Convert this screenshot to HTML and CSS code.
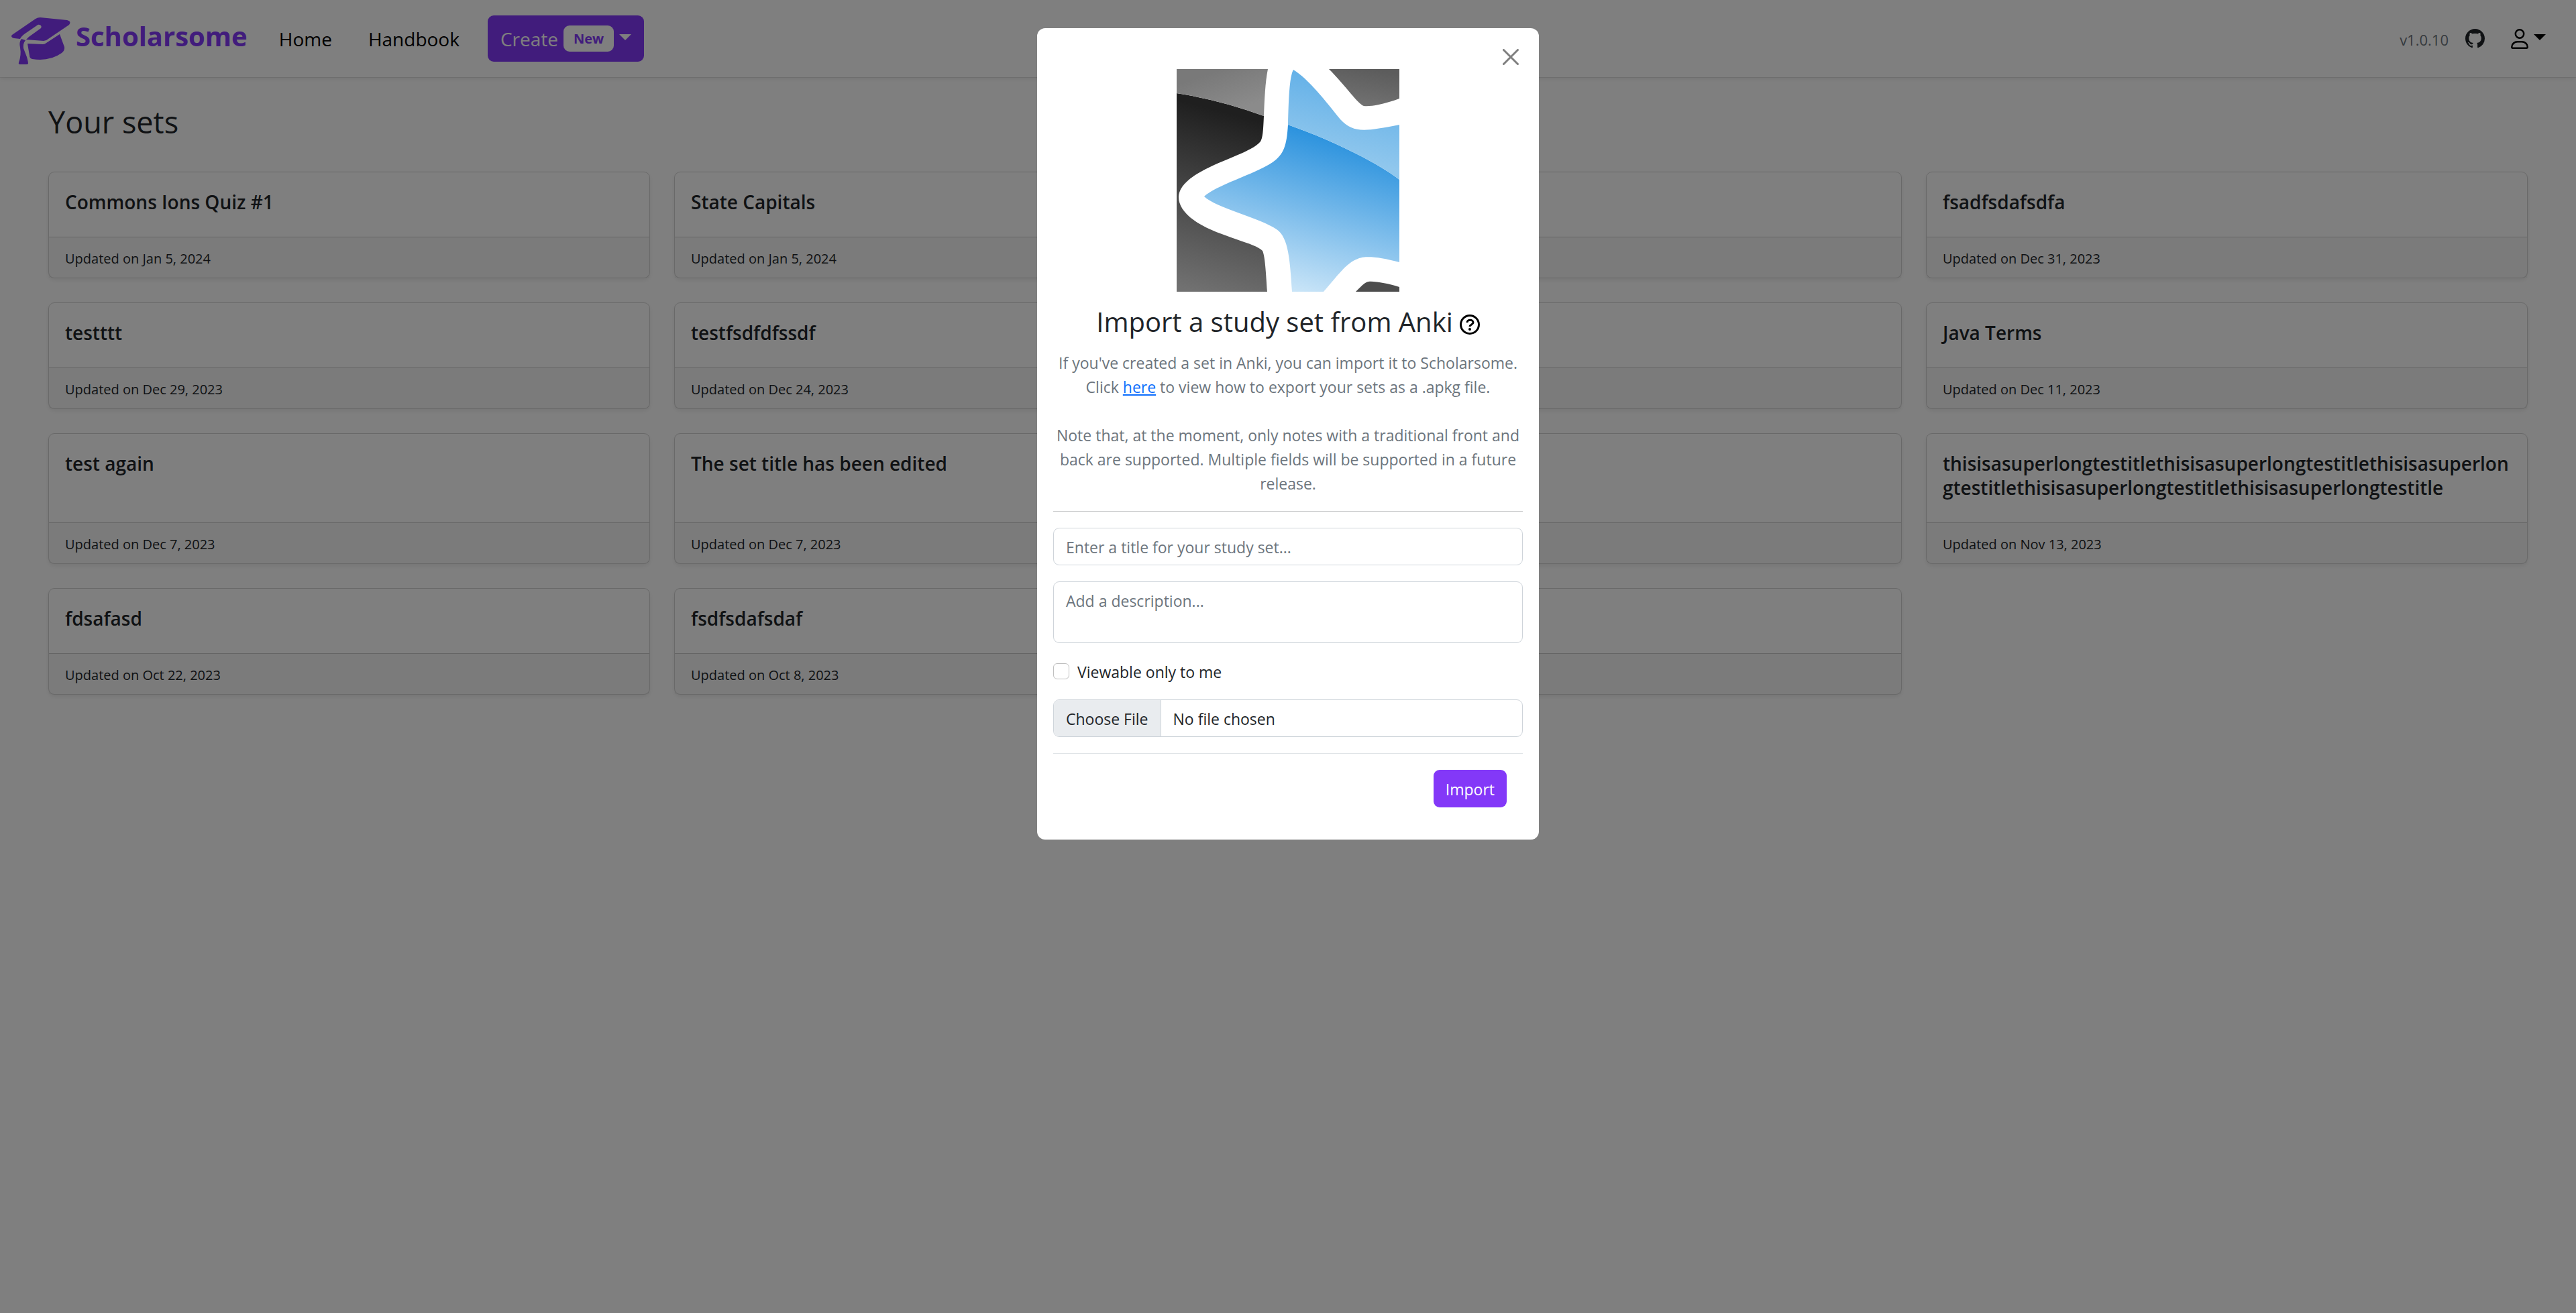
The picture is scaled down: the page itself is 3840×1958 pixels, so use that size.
FILE: index.html
```html
<!DOCTYPE html>
<html lang="en">
<head>
<meta charset="utf-8">
<title>Scholarsome</title>
<link rel="stylesheet" href="styles.css">
</head>
<body>
<header class="navbar">
  <a class="brand" href="#">
    <svg class="brand-icon" viewBox="0 0 88 70" aria-hidden="true">
      <path d="M1 26 36 2Q39 0 43 0L83 4Q90 6 86 11L52 34 48 35 22 33Q24 31 26 29L44 16Q46 12 42 11 40 10 38 12L19 25Q14 29 13 32L4 31Q-2 29 1 26Z"/>
      <path d="M15 32 21 34Q17 39 18 46L23 59Q25 66 25 69 24 70 22 70H12Q10 69 11 67 15 56 13 45 11 37 15 32Z"/>
      <path d="M24 39 47 40Q50 40 52 38L72 25 79 44Q80 49 75 53 57 66 31 62 27 61 27 57Z"/>
    </svg>
    <span>Scholarsome</span>
  </a>
  <nav class="nav">
    <a href="#">Home</a>
    <a href="#">Handbook</a>
    <button class="create" type="button"><span>Create</span><span class="badge">New</span><span class="caret"></span></button>
  </nav>
  <div class="nav-end">
    <span class="version">v1.0.10</span>
    <a class="github" href="#" aria-label="GitHub">
      <svg viewBox="0 0 16 16" aria-hidden="true"><path d="M8 0C3.58 0 0 3.58 0 8c0 3.54 2.29 6.53 5.47 7.59.4.07.55-.17.55-.38 0-.19-.01-.82-.01-1.49-2.01.37-2.53-.49-2.69-.94-.09-.23-.48-.94-.82-1.13-.28-.15-.68-.52-.01-.53.63-.01 1.08.58 1.23.82.72 1.21 1.87.87 2.33.66.07-.52.28-.87.51-1.07-1.78-.2-3.64-.89-3.64-3.95 0-.87.31-1.59.82-2.15-.08-.2-.36-1.02.08-2.12 0 0 .67-.21 2.2.82.64-.18 1.32-.27 2-.27s1.36.09 2 .27c1.53-1.04 2.2-.82 2.2-.82.44 1.1.16 1.92.08 2.12.51.56.82 1.27.82 2.15 0 3.07-1.87 3.75-3.65 3.95.29.25.54.73.54 1.48 0 1.07-.01 1.93-.01 2.2 0 .21.15.46.55.38A8.01 8.01 0 0 0 16 8c0-4.42-3.58-8-8-8"/></svg>
    </a>
    <button class="account" type="button" aria-label="Account">
      <svg viewBox="0 0 26 30" aria-hidden="true"><circle cx="13" cy="7.500" r="6.200"/><path d="M1.300 27.500V27C1.300 22.500 5 19.300 10 19.300H16C21 19.300 24.700 22.500 24.700 27V27.500Q24.700 28.700 23.500 28.700H2.500Q1.300 28.700 1.300 27.500Z"/></svg>
      <span class="caret"></span>
    </button>
  </div>
</header>

<main class="page">
  <h1>Your sets</h1>
  <div class="sets">
    <article class="card"><h2>Commons Ions Quiz #1</h2><p>Updated on Jan 5, 2024</p></article>
    <article class="card"><h2>State Capitals</h2><p>Updated on Jan 5, 2024</p></article>
    <article class="card"><h2></h2><p></p></article>
    <article class="card"><h2>fsadfsdafsdfa</h2><p>Updated on Dec 31, 2023</p></article>
    <article class="card"><h2>testttt</h2><p>Updated on Dec 29, 2023</p></article>
    <article class="card"><h2>testfsdfdfssdf</h2><p>Updated on Dec 24, 2023</p></article>
    <article class="card"><h2></h2><p></p></article>
    <article class="card"><h2>Java Terms</h2><p>Updated on Dec 11, 2023</p></article>
    <article class="card"><h2>test again</h2><p>Updated on Dec 7, 2023</p></article>
    <article class="card"><h2>The set title has been edited</h2><p>Updated on Dec 7, 2023</p></article>
    <article class="card"><h2></h2><p></p></article>
    <article class="card"><h2>thisisasuperlongtestitlethisisasuperlongtestitlethisisasuperlongtestitlethisisasuperlongtestitlethisisasuperlongtestitle</h2><p>Updated on Nov 13, 2023</p></article>
    <article class="card"><h2>fdsafasd</h2><p>Updated on Oct 22, 2023</p></article>
    <article class="card"><h2>fsdfsdafsdaf</h2><p>Updated on Oct 8, 2023</p></article>
    <article class="card"><h2></h2><p></p></article>
  </div>
</main>

<div class="backdrop">
  <section class="modal" role="dialog" aria-modal="true" aria-labelledby="modal-title">
    <button class="close" type="button" aria-label="Close">
      <svg viewBox="0 0 24 24" aria-hidden="true"><path d="M1.500 1.500 22.500 22.500M22.500 1.500 1.500 22.500"/></svg>
    </button>
    <svg class="anki" viewBox="0 0 332 332" role="img" aria-label="Anki">
      <defs>
        <linearGradient id="dark" gradientUnits="userSpaceOnUse" x1="130" y1="80" x2="60" y2="340"><stop offset="0" stop-color="#1f1f1f"/><stop offset="1" stop-color="#717171"/></linearGradient>
        <linearGradient id="gloss" gradientUnits="userSpaceOnUse" x1="70" y1="0" x2="90" y2="60"><stop offset="0" stop-color="#797979"/><stop offset="1" stop-color="#8b8b8b"/></linearGradient>
        <linearGradient id="corner" gradientUnits="userSpaceOnUse" x1="290" y1="0" x2="280" y2="56"><stop offset="0" stop-color="#5c5c5c"/><stop offset="1" stop-color="#727272"/></linearGradient>
        <linearGradient id="blue" gradientUnits="userSpaceOnUse" x1="230" y1="95" x2="165" y2="332"><stop offset="0" stop-color="#2790dd"/><stop offset="1" stop-color="#cce6f8"/></linearGradient>
        <linearGradient id="sky" gradientUnits="userSpaceOnUse" x1="230" y1="20" x2="205" y2="120"><stop offset="0" stop-color="#66b2e8"/><stop offset="1" stop-color="#90c7ed"/></linearGradient>
      </defs>
      <rect width="332" height="332" fill="#fff"/>
      <path fill="url(#dark)" d="M0 36Q65 46 130 70C129 95 128 103 125 108C112 124 66 135 31 156C11 168 3 180 3 191C3 203 11 216 31 229C65 250 119 260 128 271C132 280 133 303 135 332H0Z"/>
      <path fill="url(#gloss)" d="M0 0H136C132 20 131 45 130 70Q65 46 0 36Z"/>
      <path fill="url(#corner)" d="M227 0H332V44C305 54 287 56 279 55C270 52 253 26 227 0Z"/>
      <path fill="url(#blue)" d="M166 83C226 104 296 137 332 165V288C302 280 280 278 270 283C253 289 241 307 219 332H172C169 286 167 251 149 239C124 222 59 207 41 190C59 173 118 156 143 139C160 127 164 114 166 83Z"/>
      <path fill="url(#sky)" d="M166 83C167 45 168 12 174 1C196 14 224 50 244 75C264 96 280 93 332 83V165C296 137 226 104 166 83Z"/>
      <path fill="#4d4d4d" d="M267 332C275 324 280 318 286 317C296 316 316 320 332 325V332Z"/>
    </svg>
    <h2 class="title" id="modal-title"><span>Import a study set from Anki</span>
      <svg class="help" viewBox="0 0 30 30" aria-hidden="true"><circle cx="15" cy="15" r="13.500"/><path d="M11 12C11 7 20 7 20 12 20 15 15 15 15 18"/><circle class="dot" cx="15" cy="22" r="2"/></svg>
    </h2>
    <p class="intro">If you've created a set in Anki, you can import it to Scholarsome.<br>Click <a href="#">here</a> to view how to export your sets as a .apkg file.<br><br>Note that, at the moment, only notes with a traditional front and<br>back are supported. Multiple fields will be supported in a future<br>release.</p>
    <form class="form">
      <input class="field" type="text" aria-label="Title" placeholder="Enter a title for your study set...">
      <textarea class="field area" aria-label="Description" placeholder="Add a description..."></textarea>
      <label class="check"><input type="checkbox"><span>Viewable only to me</span></label>
      <input class="field file" type="file" aria-label="Anki file">
      <div class="actions"><button class="import" type="button">Import</button></div>
    </form>
  </section>
</div>
</body>
</html>
```
FILE: styles.css
```css
* { box-sizing: border-box; }

body {
  margin: 0;
  background: #fff;
  color: #212529;
  font-family: "Open Sans", "Noto Sans", sans-serif;
  font-size: 23px;
  line-height: 36px;
}

h1, h2, p { margin: 0; }
a { color: inherit; text-decoration: none; }
button, input, textarea { font: inherit; color: inherit; }
svg { display: block; }

/* Top bar */
.navbar {
  display: flex;
  align-items: center;
  height: 115px;
  padding: 0 45px 0 17px;
  box-shadow: 0 3px 6px rgba(0, 0, 0, .075), 0 1px 0 rgba(0, 0, 0, .08);
}
.brand {
  display: flex;
  align-items: center;
  gap: 8px;
  color: #8338f8;
  font-size: 40px;
  font-weight: 700;
  line-height: 60px;
}
.brand span { margin-bottom: 8px; }
.brand-icon { width: 88px; height: 70px; margin-top: 7px; fill: currentColor; }
.nav {
  display: flex;
  align-items: center;
  gap: 54px;
  margin-left: 47px;
  color: #000;
  font-size: 28px;
}
.create {
  display: flex;
  align-items: center;
  gap: 8px;
  height: 69px;
  margin-left: -12px;
  padding: 0 19px;
  border: 0;
  border-radius: 9px;
  background: #8338f8;
  color: #fff;
}
.badge {
  padding: 0 15px;
  border-radius: 9px;
  background: #fff;
  color: #8338f8;
  font-size: 20px;
  font-weight: 700;
  line-height: 39px;
}
.caret {
  margin-bottom: 4px;
  border: 9px solid transparent;
  border-top-color: currentColor;
  border-bottom: 0;
}
.nav-end { display: flex; align-items: center; margin-left: auto; }
.version { padding-top: 3px; color: #6c757d; font-size: 22px; }
.github { margin-left: 25px; }
.github svg { width: 29px; height: 29px; fill: #212529; }
.account {
  display: flex;
  align-items: center;
  gap: 8px;
  margin-left: 39px;
  padding: 0;
  border: 0;
  background: none;
  color: #000;
}
.account svg { width: 26px; height: 30px; fill: none; stroke: currentColor; stroke-width: 2.5; }

/* Set list */
.page { padding: 31px 72px; }
h1 { margin-bottom: 39px; font-size: 45px; font-weight: 500; line-height: 71px; }
.sets {
  display: grid;
  grid-template-columns: repeat(4, minmax(0, 1fr));
  gap: 36px;
}
.card {
  display: flex;
  flex-direction: column;
  min-height: 159px;
  border: 1px solid rgba(0, 0, 0, .176);
  border-radius: 9px;
  box-shadow: 0 3px 6px rgba(0, 0, 0, .075);
}
.card h2 {
  flex: 1;
  padding: 26px 24px 34px;
  font-size: 28px;
  font-weight: 600;
  line-height: 36px;
  overflow-wrap: anywhere;
}
.card p {
  min-height: 61px;
  padding: 14px 24px 10px;
  border-top: 1px solid rgba(0, 0, 0, .176);
  background: rgba(0, 0, 0, .03);
  font-size: 20px;
}

/* Import dialog */
.backdrop {
  position: fixed;
  inset: 0;
  padding: 42px 0;
  background: rgba(0, 0, 0, .5);
}
.modal {
  position: relative;
  width: 748px;
  margin: 0 auto;
  padding: 61px 24px 48px;
  border-radius: 12px;
  background: #fff;
}
.close {
  position: absolute;
  top: 31px;
  right: 30px;
  padding: 0;
  border: 0;
  background: none;
}
.close svg { width: 24px; height: 24px; fill: none; stroke: #7f7f7f; stroke-width: 3; stroke-linecap: round; }
.anki { width: 332px; height: 332px; margin: 0 auto; }
.title {
  display: flex;
  align-items: center;
  justify-content: center;
  gap: 10px;
  margin: 20px 0 18px;
  font-size: 40px;
  font-weight: 400;
  line-height: 50px;
}
.help { width: 30px; height: 30px; margin-top: 8px; fill: none; stroke: #000; stroke-width: 3; }
.help .dot { fill: #000; stroke: none; }
.intro { color: #6c757d; text-align: center; white-space: nowrap; }
.intro a { color: #0d6efd; text-decoration: underline; }
.form {
  display: flex;
  flex-direction: column;
  gap: 24px;
  margin-top: 23px;
  padding-top: 24px;
  border-top: 1px solid #c8c9ca;
}
.field {
  width: 100%;
  height: 56px;
  padding: 10px 18px 8px;
  border: 1px solid #ced4da;
  border-radius: 9px;
  background: #fff;
}
.field::placeholder { color: #6c757d; opacity: 1; }
.area { height: 92px; resize: none; }
.check { display: flex; align-items: center; gap: 12px; }
.check span { padding-top: 2px; line-height: 34px; }
.check input {
  width: 24px;
  height: 24px;
  margin: 0;
  border: 1px solid #bfbfbf;
  border-radius: 6px;
  appearance: none;
}
.file { padding: 0; overflow: hidden; line-height: 56px; }
.file::file-selector-button {
  height: 56px;
  margin: 0 18px 0 0;
  padding: 0 18px;
  border: 0;
  border-right: 1px solid #ced4da;
  background: #e9ecef;
  color: #212529;
  font: inherit;
}
.actions {
  display: flex;
  justify-content: flex-end;
  padding: 24px 24px 0;
  border-top: 1px solid #dee2e6;
}
.import {
  height: 56px;
  padding: 2px 18px 0;
  border: 0;
  border-radius: 9px;
  background: #8338f8;
  color: #fff;
}
```
